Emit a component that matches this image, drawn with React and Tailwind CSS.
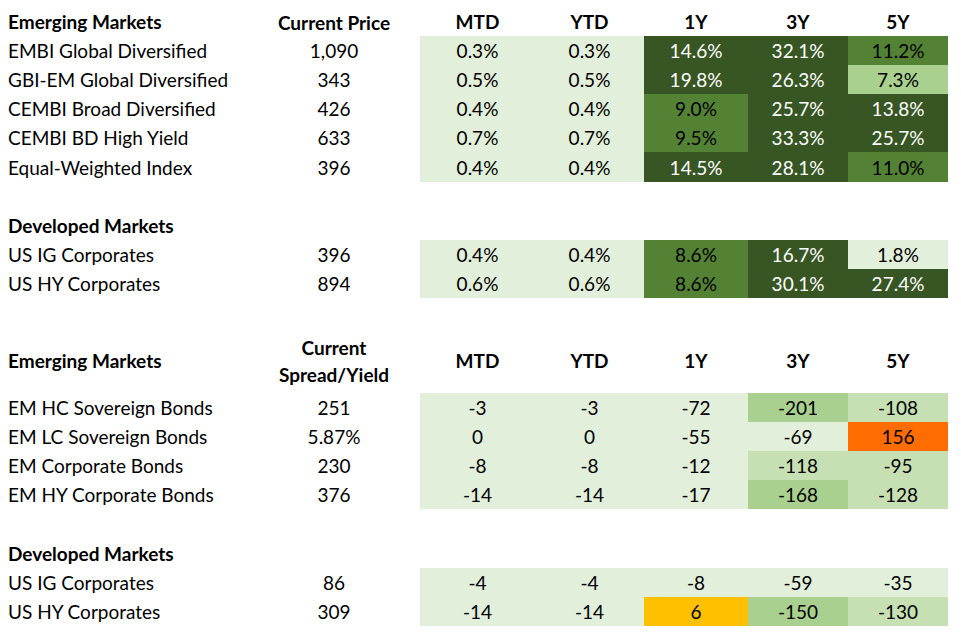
import React from "react";

const BG = {
  L: "bg-[#E2EFDA] text-black",
  D: "bg-[#375623] text-white",
  M: "bg-[#548235] text-black",
  A: "bg-[#A9D08E] text-black",
  C: "bg-[#C6E0B4] text-black",
  O: "bg-[#FF6D00] text-black",
  Y: "bg-[#FFC000] text-black",
};

const GRID =
  "grid grid-cols-[268px_132px_20px_115px_109px_104px_100px_100px] items-stretch overflow-hidden";

function DataRow({ label, cur, vals, colors, h = "h-[29px]" }) {
  return (
    <div className={`${GRID} ${h}`}>
      <div className="flex items-center pl-[8px] pt-[1px] whitespace-nowrap">{label}</div>
      <div className="flex items-center justify-center pt-[1px]">{cur}</div>
      <div />
      {vals.map((v, i) => (
        <div
          key={i}
          className={`flex items-center justify-center pt-[1px] ${BG[colors[i]]}`}
        >
          {v}
        </div>
      ))}
    </div>
  );
}

function HeaderRow({ label, cur, showCols = true, h = "h-[29px]" }) {
  const cols = ["MTD", "YTD", "1Y", "3Y", "5Y"];
  return (
    <div className={`${GRID} ${h} font-bold`}>
      <div className="flex items-center pl-[8px] pt-[1px] whitespace-nowrap">{label}</div>
      <div className="flex flex-col items-center justify-center pt-[1px] leading-[27px] text-center">
        {cur}
      </div>
      <div />
      {showCols
        ? cols.map((c) => (
            <div key={c} className="flex items-center justify-center pt-[1px]">
              {c}
            </div>
          ))
        : cols.map((c) => <div key={c} />)}
    </div>
  );
}

export default function App() {
  const em1 = [
    ["EMBI Global Diversified", "1,090", ["0.3%", "0.3%", "14.6%", "32.1%", "11.2%"], "LLDDM"],
    ["GBI-EM Global Diversified", "343", ["0.5%", "0.5%", "19.8%", "26.3%", "7.3%"], "LLDDA"],
    ["CEMBI Broad Diversified", "426", ["0.4%", "0.4%", "9.0%", "25.7%", "13.8%"], "LLMDD"],
    ["CEMBI BD High Yield", "633", ["0.7%", "0.7%", "9.5%", "33.3%", "25.7%"], "LLMDD"],
    ["Equal-Weighted Index", "396", ["0.4%", "0.4%", "14.5%", "28.1%", "11.0%"], "LLDDM"],
  ];
  const dm1 = [
    ["US IG Corporates", "396", ["0.4%", "0.4%", "8.6%", "16.7%", "1.8%"], "LLMDL"],
    ["US HY Corporates", "894", ["0.6%", "0.6%", "8.6%", "30.1%", "27.4%"], "LLMDD"],
  ];
  const em2 = [
    ["EM HC Sovereign Bonds", "251", ["-3", "-3", "-72", "-201", "-108"], "LLLAC"],
    ["EM LC Sovereign Bonds", "5.87%", ["0", "0", "-55", "-69", "156"], "LLLLO"],
    ["EM Corporate Bonds", "230", ["-8", "-8", "-12", "-118", "-95"], "LLLCC"],
    ["EM HY Corporate Bonds", "376", ["-14", "-14", "-17", "-168", "-128"], "LLLAC"],
  ];
  const dm2 = [
    ["US IG Corporates", "86", ["-4", "-4", "-8", "-59", "-35"], "LLLLL"],
    ["US HY Corporates", "309", ["-14", "-14", "6", "-150", "-130"], "LLYAC"],
  ];

  const render = (rows, lastH) =>
    rows.map((r, i) => (
      <DataRow
        key={r[0] + i}
        label={r[0]}
        cur={r[1]}
        vals={r[2]}
        colors={r[3]}
        h={lastH && i === rows.length - 1 ? lastH : "h-[29px]"}
      />
    ));

  return (
    <div
      className="w-[961px] h-[641px] bg-white text-black text-[19px] leading-[24px] pt-[7px] overflow-hidden"
      style={{ fontFamily: "Lato, 'Liberation Sans', sans-serif" }}
    >
      <HeaderRow label="Emerging Markets" cur="Current Price" />
      {render(em1, "h-[30px]")}
      <div className="h-[29px]" />
      <HeaderRow label="Developed Markets" cur="" showCols={false} />
      {render(dm1)}
      <div className="h-[29px]" />
      <HeaderRow
        label="Emerging Markets"
        cur={
          <>
            <span>Current</span>
            <span>Spread/Yield</span>
          </>
        }
        h="h-[66px]"
      />
      {render(em2)}
      <div className="h-[30px]" />
      <HeaderRow label="Developed Markets" cur="" showCols={false} />
      {render(dm2)}
    </div>
  );
}
